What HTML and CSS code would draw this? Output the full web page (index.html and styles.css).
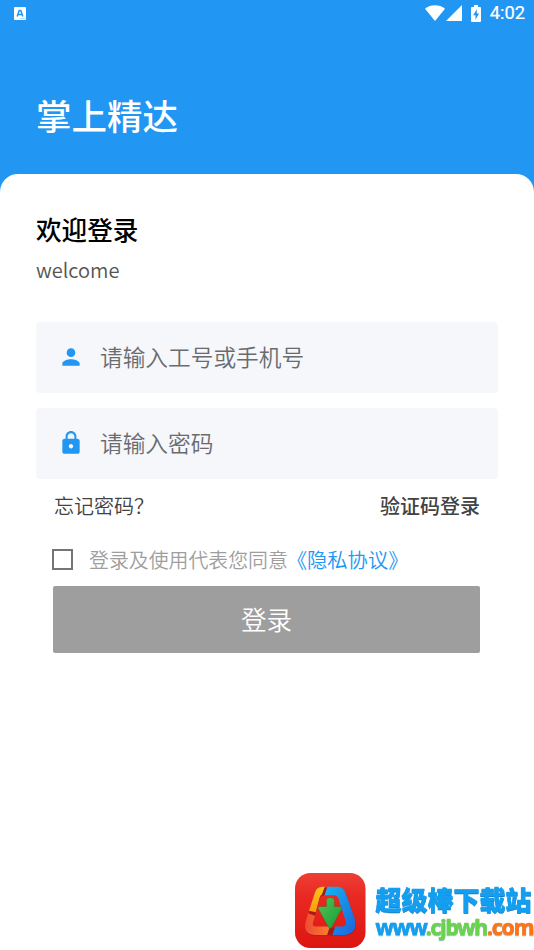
FILE: index.html
```html
<!DOCTYPE html>
<html lang="zh-CN">
<head>
<meta charset="utf-8">
<title>掌上精达</title>
<link rel="stylesheet" href="styles.css">
</head>
<body>
<div class="screen">
  <header class="hero">
    <div class="status">
      <svg class="ime" viewBox="0 0 12 13"><rect width="12" height="13" rx="1" fill="#fff"/><path d="M3.200 9.400 5.200 3.600h1.600L8.800 9.400M4.200 7.400h3.600" fill="none" stroke="#2196f3" stroke-width="1.500"/><path d="M6 11.500h5" stroke="#8cc8fa" stroke-width=".7"/></svg>
      <div class="status-right">
        <svg class="wifi" viewBox="0 0 20 16"><path d="M0 3.700C5.500-.8 14.500-.8 20 3.700L10 16z" fill="#fff"/></svg>
        <svg class="signal" viewBox="0 0 16 16"><path d="M16 0v16H0z" fill="#fff"/></svg>
        <svg class="battery" viewBox="0 0 10 17"><path d="M3 0h4v2h2q1 0 1 1v13q0 1-1 1H1q-1 0-1-1V3q0-1 1-1h2z" fill="#fff"/><path d="M5.800 4.200 2.200 10.300h2.300v4.500L8 8.500H5.800z" fill="#2196f3"/></svg>
        <span class="time">4:02</span>
      </div>
    </div>
    <h1 class="app-name">掌上精达</h1>
  </header>
  <main class="sheet">
    <h2 class="heading">欢迎登录</h2>
    <p class="welcome">welcome</p>
    <div class="field">
      <svg class="icon" viewBox="0 0 24 24"><path d="M12 12c2.210 0 4-1.790 4-4s-1.790-4-4-4-4 1.790-4 4 1.790 4 4 4zm0 2c-2.670 0-8 1.340-8 4v2h16v-2c0-2.660-5.330-4-8-4z"/></svg>
      <span>请输入工号或手机号</span>
    </div>
    <div class="field">
      <svg class="icon" viewBox="0 0 24 24"><path d="M18 8h-1V6c0-2.760-2.240-5-5-5S7 3.240 7 6v2H6c-1.100 0-2 .9-2 2v10c0 1.100.9 2 2 2h12c1.100 0 2-.9 2-2V10c0-1.100-.9-2-2-2zm-6 9c-1.100 0-2-.9-2-2s.9-2 2-2 2 .9 2 2-.9 2-2 2zm3.100-9H8.900V6c0-1.710 1.390-3.100 3.100-3.100s3.100 1.390 3.100 3.100v2z"/></svg>
      <span>请输入密码</span>
    </div>
    <div class="links"><span>忘记密码？</span><span class="code-login">验证码登录</span></div>
    <div class="agree"><span class="box"></span><span class="terms">登录及使用代表您同意</span><span class="policy">《隐私协议》</span></div>
    <div class="submit">登录</div>
  </main>
  <footer class="brand">
    <svg class="logo" viewBox="33 22 211 224">
      <defs>
        <linearGradient id="red" x1="0" y1="0" x2="0" y2="1"><stop offset="0" stop-color="#ee3f35"/><stop offset=".3" stop-color="#e82a22"/><stop offset="1" stop-color="#dd1510"/></linearGradient>
        <linearGradient id="blue" x1="0" y1="0" x2="1" y2="1"><stop offset="0" stop-color="#18b4f2"/><stop offset="1" stop-color="#1c63dc"/></linearGradient>
        <linearGradient id="amber" x1="0" y1="0" x2="0" y2="1"><stop offset="0" stop-color="#ffc61c"/><stop offset="1" stop-color="#fb9a12"/></linearGradient>
        <linearGradient id="orange" x1="0" y1="0" x2="1" y2="0"><stop offset="0" stop-color="#ee4a34"/><stop offset="1" stop-color="#fb8030"/></linearGradient>
        <linearGradient id="green" x1="0" y1="0" x2="1" y2="1"><stop offset="0" stop-color="#54c552"/><stop offset="1" stop-color="#159a38"/></linearGradient>
      </defs>
      <rect x="33" y="22" width="211" height="224" rx="46" fill="url(#red)"/>
      <path d="M122 63H162Q178 64 185 82L212 159Q222 203 183 207H90Q58 205 64 171L92 82Q98 63 115 63zM121 87Q110 87 107 94L85 170Q81 184 94 184H176Q191 181 187 166L165 97Q161 87 151 87z" fill="#a91a17" transform="translate(1 2)"/>
      <path d="M122 63 113 87Q109 88 107 94L95 139 75 135 92 82Q98 63 115 63z" fill="url(#amber)"/>
      <path d="M72 142 93 150 87 169Q83 182 96 182L137 182 129 207H90Q58 205 64 171z" fill="url(#orange)"/>
      <path d="M130 63H162Q178 64 185 82L212 159Q222 203 183 207H145L154 182H175Q189 180 185 166L163 98Q160 89 151 89H121z" fill="url(#blue)"/>
      <path d="M127 103Q128 95 139 95T151 103V122H169Q178 123 172 131L143 184Q138 191 133 184L104 131Q99 123 108 122H127z" fill="url(#green)" stroke="#6a401c" stroke-width="1"/>
    </svg>
    <div class="brand-text">
      <div class="brand-name">超级棒下载站</div>
      <div class="brand-url">www<span class="leaf">.cjbwh</span><span class="orange">.com</span></div>
    </div>
  </footer>
</div>
</body>
</html>
```
FILE: styles.css
```css
* { box-sizing: border-box; }
body, h1, h2, p { margin: 0; }
body { background: #fff; font-family: "Noto Sans CJK SC", sans-serif; font-weight: 350; }
svg { display: block; flex: none; }
span, h1, h2, p { white-space: nowrap; }
.screen { width: 534px; height: 950px; display: flex; flex-direction: column; overflow: hidden; }
.hero { height: 195px; flex: none; background: #2196f3; }
.status { height: 26px; display: flex; justify-content: space-between; align-items: center; padding: 0 9px 0 14px; }
.ime { width: 12px; height: 13px; }
.status-right { display: flex; align-items: center; }
.wifi { width: 20px; height: 16px; }
.signal { width: 16px; height: 16px; margin-left: 1px; }
.battery { width: 10px; height: 17px; margin: 0 9px 0 9px; }
.time { font: 400 18.300px/28px Roboto, sans-serif; color: #fff; -webkit-text-stroke: .2px #fff; }
.app-name { padding-left: 36px; margin-top: 63px; font-size: 35.500px; line-height: 52px; font-weight: 500; color: #fff; }
.sheet { flex: 1; margin-top: -21px; padding: 37px 36px 0; background: #fff; border-radius: 18px 18px 0 0; }
.heading { font-size: 25.600px; line-height: 36px; font-weight: 500; color: #000; }
.welcome { margin-top: 8px; font-size: 20px; line-height: 30px; color: #555; }
.field { height: 71px; margin-top: 37px; display: flex; align-items: center; padding: 0 0 1px 22px; border-radius: 4px; background: #f5f7fb; font-size: 22.700px; line-height: 34px; color: #6a6b6e; }
.field span { padding-bottom: 1px; }
.field + .field { margin-top: 15px; }
.icon { width: 26px; height: 26px; margin-right: 16px; fill: #2196f3; }
.links { height: 53px; padding: 0 18px; display: flex; justify-content: space-between; align-items: center; font-size: 20px; color: #424242; }
.code-login { font-weight: 500; }
.agree { height: 54px; display: flex; align-items: center; padding-left: 16px; font-size: 19.900px; color: #9e9e9e; }
.box { width: 21px; height: 21px; border: 2px solid #757575; margin-right: 16px; }
.policy { color: #2196f3; margin-left: 9px; font-size: 20.300px; font-feature-settings: "halt"; }
.submit { height: 67px; margin: 0 18px 0 17px; padding-bottom: 2px; border-radius: 2px; background: #9e9e9e; color: #fff; display: flex; align-items: center; justify-content: center; font-size: 25.600px; }
.brand { height: 77px; flex: none; display: flex; padding-left: 295px; }
.logo { width: 70.500px; height: 75px; }
.brand-text { padding: 8px 0 0 10px; white-space: nowrap; color: #149ef0; }
.brand-name { font-size: 26px; line-height: 35px; font-weight: 900; -webkit-text-stroke: .4px #18a4f4; filter: drop-shadow(.5px 1px 0 #1c7fc6); }
.brand-url { font: 700 21.300px/22px "Noto Sans", sans-serif; letter-spacing: -1.200px; -webkit-text-stroke: .6px currentColor; filter: drop-shadow(.5px 1px 0 #55889a88); }
.leaf { color: #6ad34d; }
.orange { color: #ff7415; }
```
